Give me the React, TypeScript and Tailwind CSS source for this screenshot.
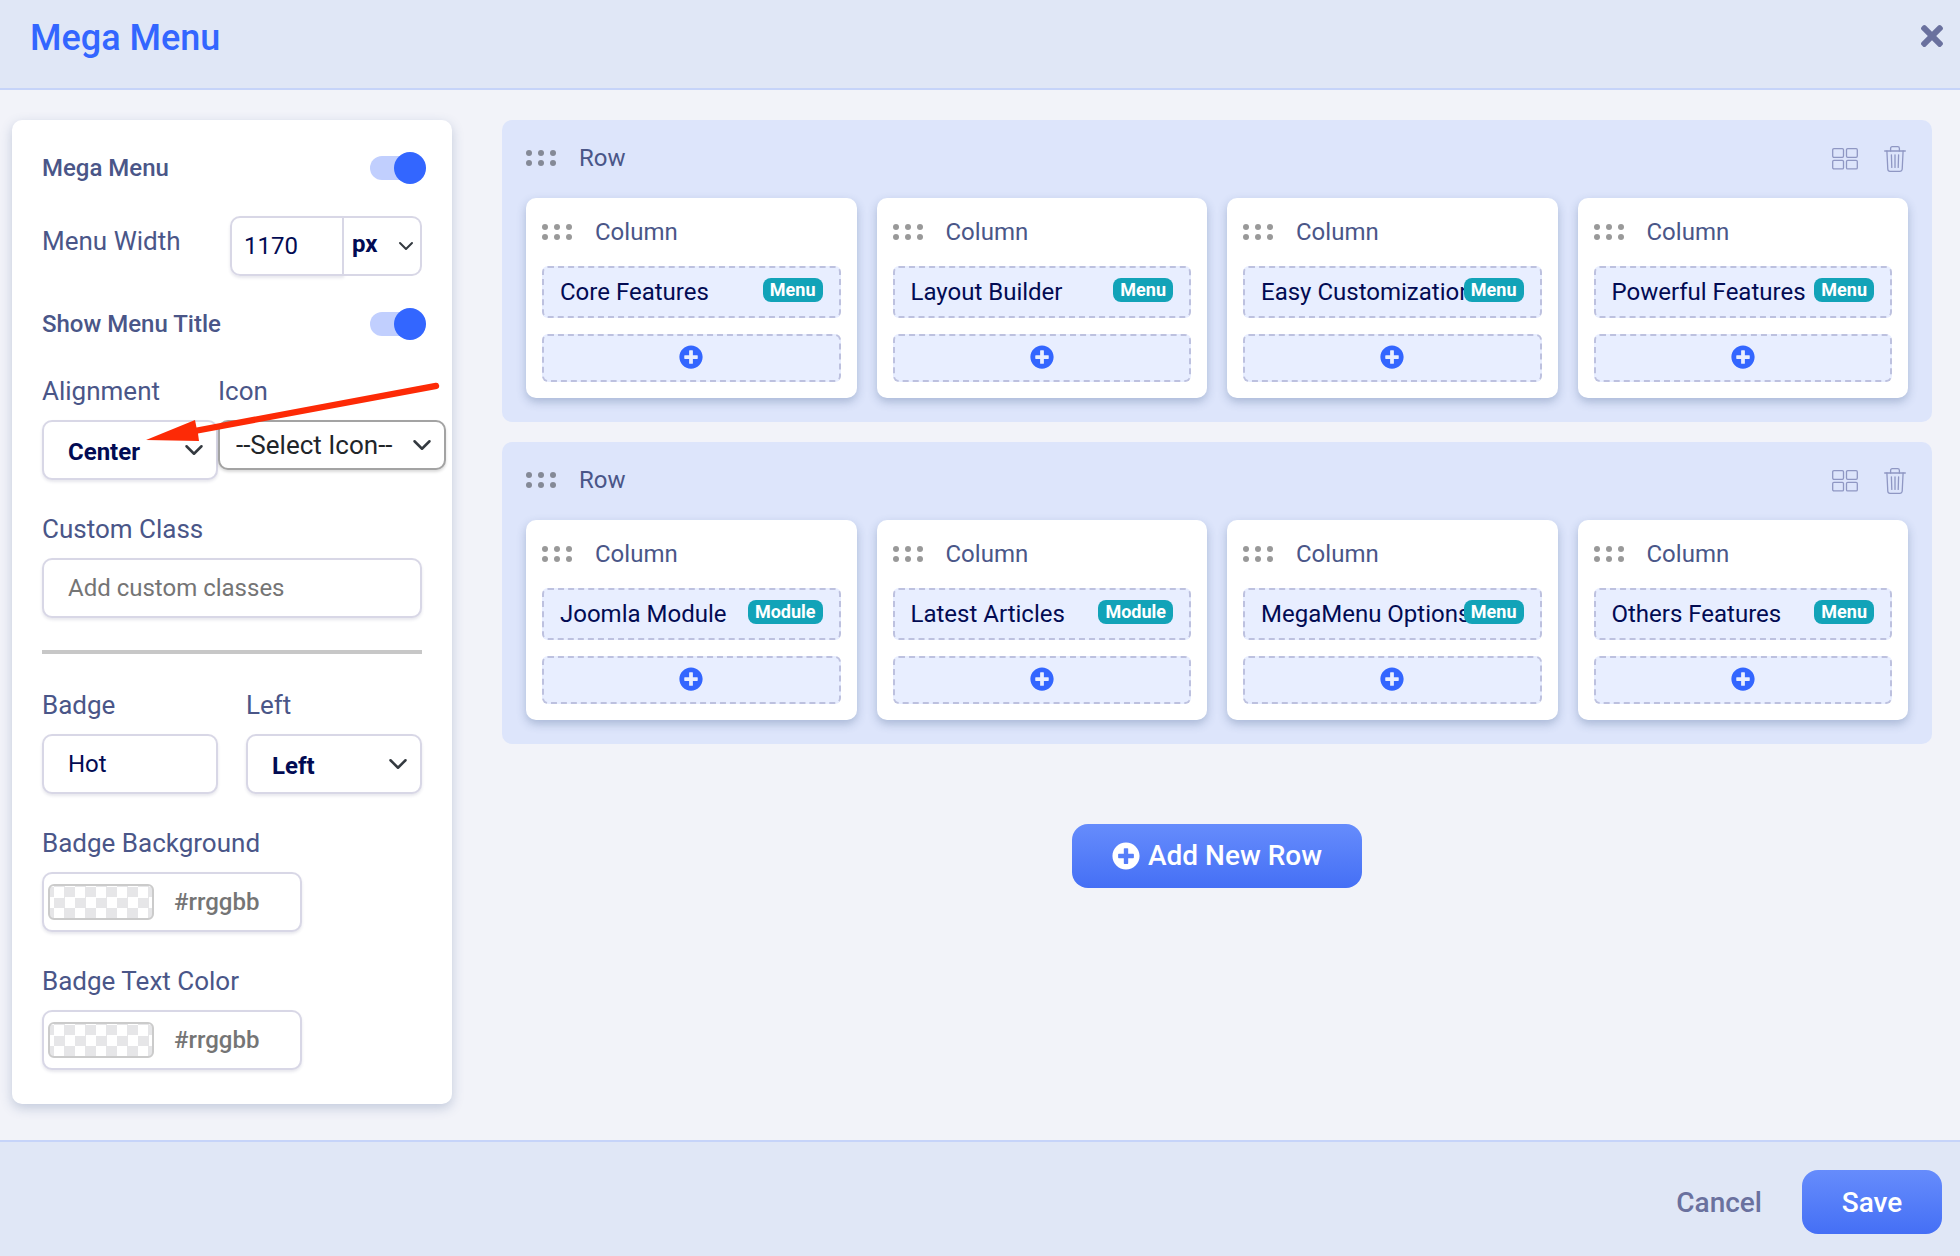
import { useState } from "react";
import type { InputHTMLAttributes, ReactNode, SelectHTMLAttributes } from "react";
import clsx from "clsx";
import { FaPlusCircle, FaTimes } from "react-icons/fa";

type Item = { title: string; kind: "Menu" | "Module" };

const rows: Item[][] = [
  [
    { title: "Core Features", kind: "Menu" },
    { title: "Layout Builder", kind: "Menu" },
    { title: "Easy Customization", kind: "Menu" },
    { title: "Powerful Features", kind: "Menu" },
  ],
  [
    { title: "Joomla Module", kind: "Module" },
    { title: "Latest Articles", kind: "Module" },
    { title: "MegaMenu Options", kind: "Menu" },
    { title: "Others Features", kind: "Menu" },
  ],
];

const controlClass =
  "h-15 w-full rounded-[10px] border-2 border-[#d8d7e6] bg-white px-6 text-2xl text-[#020b53] shadow-[0_2px_3px_rgba(60,60,110,0.12)] outline-none placeholder:text-[#757575]";

function DragHandle() {
  return (
    <svg width="30" height="16" viewBox="0 0 30 16" fill="#000" fillOpacity="0.4" aria-hidden="true">
      <circle cx="3" cy="3" r="3" />
      <circle cx="15" cy="3" r="3" />
      <circle cx="27" cy="3" r="3" />
      <circle cx="3" cy="13" r="3" />
      <circle cx="15" cy="13" r="3" />
      <circle cx="27" cy="13" r="3" />
    </svg>
  );
}

function GridIcon() {
  return (
    <svg width="26" height="22" viewBox="0 0 26 22" fill="none" stroke="#8f97c3" strokeWidth="1.3" aria-hidden="true">
      <rect x="0.7" y="0.7" width="10.8" height="8.6" rx="1.2" />
      <rect x="14.5" y="0.7" width="10.8" height="8.6" rx="1.2" />
      <rect x="0.7" y="12.3" width="10.8" height="8.6" rx="1.2" />
      <rect x="14.5" y="12.3" width="10.8" height="8.6" rx="1.2" />
    </svg>
  );
}

function TrashIcon() {
  return (
    <svg
      width="22"
      height="26"
      viewBox="0 0 22 26"
      fill="none"
      stroke="#8f97c3"
      strokeWidth="1.3"
      strokeLinecap="round"
      strokeLinejoin="round"
      aria-hidden="true"
    >
      <path d="M0.7 5H21.3" />
      <path d="M6.6 5V2.4Q6.6 0.7 8.3 0.7H13.7Q15.4 0.7 15.4 2.4V5" />
      <path d="M2.9 5L3.8 23.3Q4 25.3 6 25.3H16Q18 25.3 18.2 23.3L19.1 5" />
      <path d="M7.4 8.8L7.8 21.4M11 8.8V21.4M14.6 8.8L14.2 21.4" />
    </svg>
  );
}

function Chevron({ className }: { className?: string }) {
  return (
    <svg
      viewBox="0 0 16 16"
      fill="none"
      stroke="#343a40"
      strokeWidth="2"
      strokeLinecap="round"
      strokeLinejoin="round"
      className={clsx("pointer-events-none absolute top-1/2 -translate-y-1/2", className)}
      aria-hidden="true"
    >
      <path d="M2 5l6 6 6-6" />
    </svg>
  );
}

function Toggle({ id, label }: { id: string; label: string }) {
  const [on, setOn] = useState(true);
  return (
    <div className="flex h-9 items-center justify-between">
      <label htmlFor={id} className="text-2xl font-medium">
        {label}
      </label>
      <input
        id={id}
        type="checkbox"
        role="switch"
        checked={on}
        onChange={(e) => setOn(e.target.checked)}
        className="relative h-6 w-13 appearance-none rounded-full bg-[#d5d8e6] after:absolute after:-top-1 after:-left-1 after:size-8 after:rounded-full after:bg-[#8b93b5] checked:bg-[#c1cffe] checked:after:left-6 checked:after:bg-[#3366ff]"
      />
    </div>
  );
}

function Field({ id, label, className, children }: { id: string; label: string; className?: string; children: ReactNode }) {
  return (
    <div className={className}>
      <label htmlFor={id} className="mb-[10px] block text-[26px] leading-[38px]">
        {label}
      </label>
      {children}
    </div>
  );
}

function TextInput(props: InputHTMLAttributes<HTMLInputElement>) {
  return <input type="text" {...props} className={controlClass} />;
}

function Select({ className, children, ...props }: SelectHTMLAttributes<HTMLSelectElement>) {
  return (
    <div className="relative">
      <select {...props} className={clsx("appearance-none", className ?? clsx(controlClass, "pt-[3px] font-bold"))}>
        {children}
      </select>
      <Chevron className="right-[14px] size-5" />
    </div>
  );
}

function ColorInput({ id }: { id: string }) {
  return (
    <div className="flex h-15 w-[260px] items-center rounded-[10px] border-2 border-[#d8d7e6] bg-white pl-1 shadow-[0_2px_3px_rgba(60,60,110,0.12)]">
      <button
        type="button"
        aria-label="Pick a color"
        className="h-9 w-[106px] shrink-0 rounded-md border-2 border-[#cbcbcb] bg-[repeating-conic-gradient(#e6e6e8_0_25%,#ffffff_0_50%)] bg-[length:21px_21px] bg-[position:4px_1px]"
      />
      <input
        id={id}
        type="text"
        placeholder="#rrggbb"
        className="ml-5 w-full min-w-0 text-2xl font-medium outline-none placeholder:text-[#757575]"
      />
    </div>
  );
}

function Sidebar() {
  return (
    <aside className="flex w-[440px] shrink-0 flex-col gap-[30px] self-start rounded-[10px] bg-white px-[30px] pt-[30px] pb-[34px] shadow-[0_4px_12px_rgba(50,80,130,0.25)]">
      <Toggle id="mega-menu" label="Mega Menu" />

      <div className="flex items-start justify-between">
        <label htmlFor="menu-width" className="text-[26px] leading-[50px]">
          Menu Width
        </label>
        <div className="flex w-48">
          <input
            id="menu-width"
            type="text"
            defaultValue="1170"
            className="h-15 w-[114px] rounded-l-[10px] border-2 border-[#d8d7e6] px-3 text-2xl text-[#020b53] shadow-[0_2px_3px_rgba(60,60,110,0.12)] outline-none"
          />
          <div className="relative flex-1">
            <select
              aria-label="Width unit"
              defaultValue="px"
              className="h-15 w-full appearance-none rounded-r-[10px] border-2 border-l-0 border-[#d8d7e6] bg-white pb-1 pl-2 text-2xl font-bold text-[#020b53] outline-none"
            >
              <option>px</option>
              <option>%</option>
            </select>
            <Chevron className="right-2 size-4" />
          </div>
        </div>
      </div>

      <Toggle id="show-title" label="Show Menu Title" />

      <div className="relative flex">
        <Field id="alignment" label="Alignment" className="w-44 shrink-0">
          <Select id="alignment" defaultValue="Center">
            <option>Left</option>
            <option>Center</option>
            <option>Right</option>
          </Select>
        </Field>
        <Field id="icon" label="Icon" className="w-[228px] shrink-0">
          <Select
            id="icon"
            className="h-[50px] w-full rounded-[10px] border-2 border-[#a3a3a3] bg-white pl-4 text-[26px] text-[#212529] shadow-[0_2px_3px_rgba(0,0,0,0.15)] outline-none"
          >
            <option>--Select Icon--</option>
          </Select>
        </Field>
        <svg
          width="296"
          height="60"
          viewBox="0 0 296 60"
          fill="#fd2a06"
          className="pointer-events-none absolute top-[10px] left-[104px]"
          aria-hidden="true"
        >
          <path d="M0 58L49 38L50.5 45.5L289.500 .8A3.200 3.200 0 0 1 291 7L52 51.500L53 59Z" />
        </svg>
      </div>

      <Field id="custom-class" label="Custom Class">
        <TextInput id="custom-class" placeholder="Add custom classes" />
      </Field>

      <hr className="my-0.5 border-t-4 border-[#c7c7c7]" />

      <div className="grid grid-cols-2 gap-7">
        <Field id="badge" label="Badge">
          <TextInput id="badge" defaultValue="Hot" />
        </Field>
        <Field id="badge-position" label="Left">
          <Select id="badge-position" defaultValue="Left">
            <option>Left</option>
            <option>Right</option>
          </Select>
        </Field>
      </div>

      <Field id="badge-background" label="Badge Background">
        <ColorInput id="badge-background" />
      </Field>
      <Field id="badge-text-color" label="Badge Text Color">
        <ColorInput id="badge-text-color" />
      </Field>
    </aside>
  );
}

function ColumnCard({ item }: { item: Item }) {
  return (
    <div className="min-w-0 rounded-[10px] bg-white p-4 shadow-[0_4px_10px_rgba(50,80,130,0.3)]">
      <div className="mb-4 flex h-9 items-center gap-[23px] text-2xl">
        <DragHandle />
        Column
      </div>
      <div className="relative mb-4 h-13 rounded-md border-2 border-dashed border-[#bdc1df] bg-[#e8eeff] px-4 py-1.5">
        <span className="block text-2xl leading-9 whitespace-nowrap text-[#020b53]">{item.title}</span>
        <span className="absolute top-[10px] right-4 rounded-lg bg-[#12a3b8] px-[7px] text-lg leading-6 font-bold text-white">
          {item.kind}
        </span>
      </div>
      <button
        type="button"
        aria-label="Add item"
        className="flex h-12 w-full items-center justify-center rounded-md border-2 border-dashed border-[#bdc1df] bg-[#e8eeff] pb-0.5 text-2xl text-[#3366ff]"
      >
        <FaPlusCircle />
      </button>
    </div>
  );
}

function MenuRow({ items }: { items: Item[] }) {
  return (
    <section className="rounded-[10px] bg-[#dde5fb] px-6 pt-5 pb-6">
      <div className="mb-[22px] flex h-9 items-center justify-between">
        <div className="flex items-center gap-[23px] text-2xl">
          <DragHandle />
          Row
        </div>
        <div className="flex items-center gap-[26px] pt-0.5 pr-0.5">
          <button type="button" aria-label="Change layout">
            <GridIcon />
          </button>
          <button type="button" aria-label="Delete row">
            <TrashIcon />
          </button>
        </div>
      </div>
      <div className="grid grid-cols-4 gap-5">
        {items.map((item) => (
          <ColumnCard key={item.title} item={item} />
        ))}
      </div>
    </section>
  );
}

export default function App() {
  return (
    <div className="flex min-h-screen flex-col bg-[#f2f3f9] font-[Roboto,sans-serif] text-[#4a5688]">
      <header className="flex h-[90px] items-start justify-between border-b-2 border-[#c6d4f9] bg-[#e0e7f6] pt-[18px] pr-3 pl-[30px]">
        <h1 className="text-4xl font-medium text-[#3366ff]">Mega Menu</h1>
        <button type="button" aria-label="Close" className="pt-0.5 text-[32px] text-[#6a719e]">
          <FaTimes />
        </button>
      </header>

      <main className="flex flex-1 gap-[50px] pt-[30px] pr-7 pb-9 pl-3">
        <Sidebar />
        <div className="flex min-w-0 flex-1 flex-col gap-5">
          {rows.map((items, i) => (
            <MenuRow key={i} items={items} />
          ))}
          <button
            type="button"
            className="mt-15 flex h-16 items-center gap-2 self-center rounded-2xl bg-linear-to-b from-[#668cfc] to-[#456ff5] px-10 text-[28px] font-medium text-white"
          >
            <FaPlusCircle />
            Add New Row
          </button>
        </div>
      </main>

      <footer className="flex items-center justify-end gap-10 border-t-2 border-[#c6d4f9] bg-[#e0e7f6] pt-7 pr-[18px] pb-[22px] text-[28px] font-medium">
        <button type="button" className="pt-0.5 text-[#6a719e]">
          Cancel
        </button>
        <button type="button" className="h-16 w-[140px] rounded-2xl bg-linear-to-b from-[#668cfc] to-[#456ff5] pt-0.5 text-white">
          Save
        </button>
      </footer>
    </div>
  );
}
